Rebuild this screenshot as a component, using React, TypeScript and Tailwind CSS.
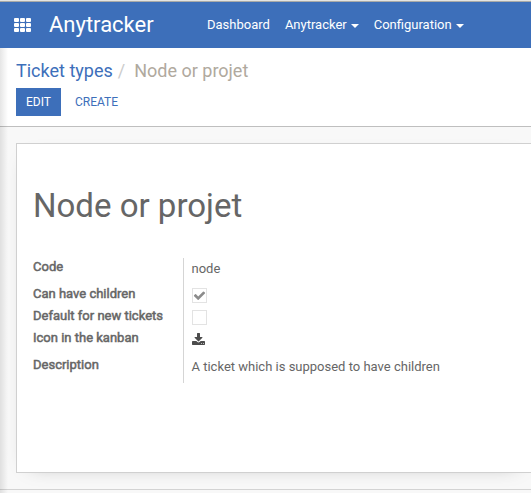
import type { ReactNode } from 'react';

function AppsIcon() {
  return (
    <svg width="17" height="14" viewBox="0 0 17 14" fill="currentColor" aria-hidden="true">
      {[0, 6, 12].map((x) =>
        [0, 5, 10].map((y) => <rect key={`${x}-${y}`} x={x} y={y} width="5" height="4" rx="1" />),
      )}
    </svg>
  );
}

function CheckIcon() {
  return (
    <svg viewBox="0 0 1792 1792" fill="currentColor" aria-hidden="true" className="pointer-events-none absolute top-px left-px size-[13px] text-[#8c8c8c]">
      <path d="M1671 566q0 40-28 68l-724 724-136 136q-28 28-68 28t-68-28l-136-136-362-362q-28-28-28-68t28-68l136-136q28-28 68-28t68 28l294 295 656-657q28-28 68-28t68 28l136 136q28 28 28 68z" />
    </svg>
  );
}

function DownloadIcon() {
  return (
    <svg viewBox="64 0 1664 1664" fill="currentColor" aria-hidden="true" className="mt-0.5 size-[13px] text-[#4c4c4c]">
      <path d="M1344 1344q0-26-19-45t-45-19-45 19-19 45 19 45 45 19 45-19 19-45zm256 0q0-26-19-45t-45-19-45 19-19 45 19 45 45 19 45-19 19-45zm128-224v320q0 40-28 68t-68 28h-1472q-40 0-68-28t-28-68v-320q0-40 28-68t68-28h465l135 136q58 56 136 56t136-56l136-136h464q40 0 68 28t28 68zm-325-569q17 41-14 70l-448 448q-18 19-45 19t-45-19l-448-448q-31-29-14-70 17-39 59-39h256v-448q0-26 19-45t45-19h256q26 0 45 19t19 45v448h256q42 0 59 39z" />
    </svg>
  );
}

function MenuButton({ children }: { children: ReactNode }) {
  return (
    <button type="button" aria-haspopup="menu" className="flex items-center gap-1">
      {children}
      <svg width="8" height="4" viewBox="0 0 8 4" fill="currentColor" className="mt-0.5" aria-hidden="true">
        <path d="M0 0h8l-4 4z" />
      </svg>
    </button>
  );
}

function Row({ label, htmlFor, tall, children }: { label: string; htmlFor?: string; tall?: boolean; children: ReactNode }) {
  return (
    <tr className={tall ? 'h-[27px]' : 'h-[22px]'}>
      <th scope="row" className="w-[150px] border-r border-[#d5d5d5] p-0 text-left align-top font-normal [-webkit-text-stroke:0.5px_#666]">
        {htmlFor ? <label htmlFor={htmlFor}>{label}</label> : label}
      </th>
      <td className={tall ? 'p-0 pt-0.5 pl-2 align-top' : 'p-0 pt-[3px] pl-2 align-top'}>{children}</td>
    </tr>
  );
}

function CheckBox({ id, checked }: { id: string; checked?: boolean }) {
  return (
    <span className="relative block size-[15px]">
      <input
        id={id}
        type="checkbox"
        defaultChecked={checked}
        disabled
        className="block size-[15px] appearance-none border border-[#e3e3e3] bg-white"
      />
      {checked && <CheckIcon />}
    </span>
  );
}

export default function App() {
  return (
    <div className="flex min-h-screen flex-col overflow-hidden bg-[#f8f8f8] font-[Roboto,sans-serif] text-[13px] leading-[18px] text-[#666]">
      <div className="h-px bg-[#e4e4e2]" />
      <header className="flex h-[47px] items-center border-t border-[#a9aaa8] bg-[#3d6fba] pl-3.5 whitespace-nowrap text-white">
        <button type="button" aria-label="Applications">
          <AppsIcon />
        </button>
        <span className="w-[158px] pl-[18px] text-[22px] leading-7">Anytracker</span>
        <nav className="flex items-center gap-[15px] pl-[18px]">
          <a href="#dashboard">Dashboard</a>
          <MenuButton>Anytracker</MenuButton>
          <MenuButton>Configuration</MenuButton>
        </nav>
      </header>

      <div className="relative flex grow flex-col">
        <section className="border-b border-[#bfbfbf] bg-white px-4 pt-3 pb-2.5">
          <nav aria-label="Breadcrumb" className="flex text-[18px] leading-[22px]">
            <a href="#types" className="text-[#3d6fba]">Ticket types</a>
            <span className="px-[5px] text-[#ccc]">/</span>
            <span className="pl-1 text-[#b0a99e]">Node or projet</span>
          </nav>
          <div className="mt-1.5 flex gap-1 text-xs leading-7">
            <button type="button" className="bg-[#3d6fba] px-2.5 text-white">EDIT</button>
            <button type="button" className="px-2.5 text-[#3d6fba]">CREATE</button>
          </div>
        </section>

        <main className="border-b border-[#d3d3d3] pt-4 pb-4 pl-4">
          <article className="min-h-[330px] border border-r-0 border-[#d0d0d0] bg-white px-4 pt-[42px] shadow-[0_5px_20px_-15px_rgba(0,0,0,0.4)]">
            <h1 className="text-[33px] leading-10">Node or projet</h1>
            <table className="mt-8 w-full border-collapse">
              <tbody>
                <Row label="Code" tall>node</Row>
                <Row label="Can have children" htmlFor="children"><CheckBox id="children" checked /></Row>
                <Row label="Default for new tickets" htmlFor="default"><CheckBox id="default" /></Row>
                <Row label="Icon in the kanban" tall><DownloadIcon /></Row>
                <Row label="Description" tall>A ticket which is supposed to have children</Row>
              </tbody>
            </table>
          </article>
        </main>
        <div className="pointer-events-none absolute inset-y-0 left-0 w-2 bg-linear-to-r from-black/10 to-transparent" />
      </div>
    </div>
  );
}
